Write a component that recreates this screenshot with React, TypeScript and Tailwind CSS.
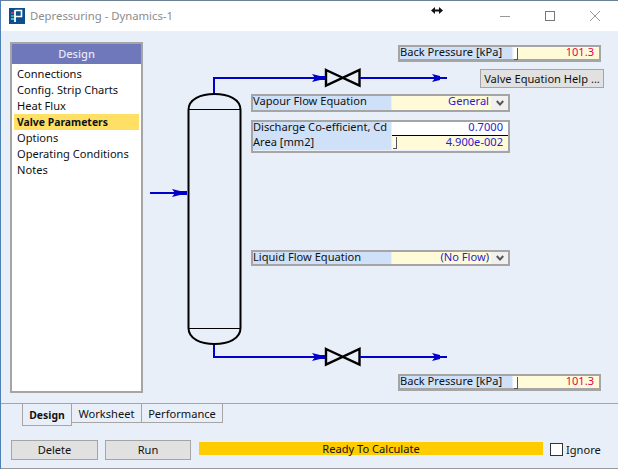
import React from 'react';

const uiFont = { fontFamily: '"Noto Sans", "DejaVu Sans", sans-serif' };

const NAV_ITEMS = ['Connections', 'Config. Strip Charts', 'Heat Flux', 'Valve Parameters', 'Options', 'Operating Conditions', 'Notes'];

const Slider = () => (
  <span className="absolute left-[1px] top-[1px] h-[12px] w-[4px] border-r border-b border-[#555] bg-white" />
);

const LabelCell: React.FC<{ text: string; width: string; lead?: string }> = ({ text, width, lead = 'leading-[10px]' }) => (
  <div className={`${width} ${lead} h-full shrink-0 whitespace-nowrap bg-[#cfe1f9] text-[11.1px] text-[#111]`}>{text}</div>
);

const BackPressure: React.FC<{ className: string }> = ({ className }) => (
  <div className={`${className} left-[398px] flex h-[17px] w-[203px] border-2 border-b-[3px] border-[#a5a5a5] bg-[#e9eff9]`}>
    <LabelCell text="Back Pressure [kPa]" width="w-[112px]" />
    <div className="relative ml-[1px] flex-1 bg-[#fffbd8] pr-[5px] text-right text-[11.1px] leading-[10px] text-[#e6005c]">
      <Slider />
      101.3
    </div>
  </div>
);

const DropField: React.FC<{ className: string; label: string; value: string }> = ({ className, label, value }) => (
  <div className={`${className} left-[251px] flex w-[259px] border-2 border-[#a5a5a5] bg-[#e9eff9]`}>
    <LabelCell text={label} width="w-[138px]" />
    <div className="ml-[1px] flex-1 bg-[#fffbd8] pr-[2px] text-right text-[11.1px] leading-[10px] text-[#2a1ad0]">{value}</div>
    <div className="flex w-[17px] shrink-0 items-center justify-center bg-[#f0f0f0]">
      <svg width="8" height="7" viewBox="0 0 8 7">
        <path d="M0.8 1 L4 4.6 L7.2 1" fill="none" stroke="#555" strokeWidth="2" />
      </svg>
    </div>
  </div>
);

const ValveFlow: React.FC<{ y: number }> = ({ y }) => (
  <g>
    <path d={`M326 ${y - 8} L359.5 ${y + 7.5} V${y - 8} L326 ${y + 7.5} Z`} fill="none" stroke="#000" strokeWidth="2.4" />
    <path d={`M360 ${y} H447`} stroke="#0000c8" strokeWidth="2" fill="none" />
    <path d={`M432 ${y - 4} L440 ${y - 2} V${y + 2} L432 ${y + 4} L435 ${y} Z`} fill="#0000c8" />
    <path d={`M312 ${y - 4} L320 ${y - 2} H325 V${y + 2} H320 L312 ${y + 4} L315 ${y} Z`} fill="#0000c8" />
  </g>
);

const Diagram = () => (
  <svg className="absolute left-0 top-0" width="618" height="469" viewBox="0 0 618 469">
    <path d="M214 94 V78 H325" fill="none" stroke="#0000c8" strokeWidth="2" />
    <path d="M214 344 V357 H325" fill="none" stroke="#0000c8" strokeWidth="2" />
    <path d="M150 193 H187" fill="none" stroke="#0000c8" strokeWidth="2" />
    <path d="M172 189 L180 191 H187 V195 H180 L172 197 L175 193 Z" fill="#0000c8" />
    <ValveFlow y={78} />
    <ValveFlow y={357} />
    <path d="M188.5 110 C188.5 99 201 94 214.5 94 C228 94 240.5 99 240.5 110 V328 C240.5 339 228 344 214.5 344 C201 344 188.5 339 188.5 328 Z" fill="#e9eff9" stroke="#000" strokeWidth="2" />
    <path d="M188 109.5 H241 M188 328.5 H241" stroke="#000" strokeWidth="1" />
  </svg>
);

export default function App() {
  return (
    <div className="relative h-[469px] w-[618px] overflow-hidden bg-[#e9eff9]" style={uiFont}>
      <div className="flex h-full flex-col border-l border-[#4f81b5]">
        {/* title bar */}
        <div className="flex h-[31px] shrink-0 items-center border-t border-[#6b7f95] bg-white pl-[8px]">
          <svg width="16" height="16" viewBox="0 0 16 16" className="shrink-0">
            <rect width="16" height="16" fill="#0d4f8c" />
            <path d="M6 2.5 H12.5 V8.5 H6" fill="none" stroke="#fff" strokeWidth="1.6" />
            <path d="M6 2 V14" stroke="#fff" strokeWidth="1.8" />
            <path d="M2 5 H5" stroke="#e53935" strokeWidth="1.6" />
            <path d="M2 8 H5" stroke="#43c463" strokeWidth="1.6" />
            <path d="M2 11 H5" stroke="#5fd0f0" strokeWidth="1.6" />
          </svg>
          <span className="ml-[5px] text-[11.3px] text-[#8d8d8d]">Depressuring - Dynamics-1</span>
          <span className="ml-auto mr-[18px] flex items-center gap-[35px]">
            <svg width="10" height="10" viewBox="0 0 10 10">
              <path d="M0 5.5 H10" stroke="#999" strokeWidth="1" />
            </svg>
            <svg width="10" height="10" viewBox="0 0 10 10">
              <rect x="0.5" y="0.5" width="9" height="9" fill="none" stroke="#777" strokeWidth="1" />
            </svg>
            <svg width="10" height="10" viewBox="0 0 10 10">
              <path d="M0 0 L10 10 M10 0 L0 10" stroke="#999" strokeWidth="1" />
            </svg>
          </span>
        </div>

        {/* body */}
        <div className="flex-1 pl-[9px] pt-[11px]">
          <div className="h-[351px] w-[133px] border-2 border-[#a5a5a5] bg-white">
            <div className="h-[20px] bg-[#6f78bb] text-center text-[11.1px] font-medium leading-[20px] text-[#e8e8f5]">Design</div>
            <ul className="mt-[2px] px-[2px] text-[11.1px] leading-[16px] text-[#111]">
              {NAV_ITEMS.map((item) => (
                <li key={item} className={item === 'Valve Parameters' ? 'bg-[#ffe064] pl-[3px] text-[10.4px] font-bold' : 'pl-[3px]'}>
                  {item}
                </li>
              ))}
            </ul>
          </div>
        </div>

        {/* tabs */}
        <div className="flex h-[37px] shrink-0 items-start border-t border-[#a5a5a5] pl-[21px] text-[11.1px] text-[#111]">
          <div className="h-[22px] w-[50px] border-x border-b border-[#a5a5a5] text-center text-[10.4px] font-bold leading-[22px]">Design</div>
          <div className="h-[19px] w-[70px] border-r border-b border-[#a5a5a5] text-center leading-[20px]">Worksheet</div>
          <div className="h-[19px] w-[81px] border-r border-b border-[#a5a5a5] text-center leading-[20px]">Performance</div>
        </div>

        {/* bottom buttons */}
        <div className="flex h-[29px] shrink-0 items-start border-b border-[#9a9a9a] pl-[10px] text-[11.1px] text-[#111]">
          <button className="h-[20px] w-[87px] border border-[#a5a5a5] bg-[#e1e1e1] leading-[18px]">Delete</button>
          <button className="ml-[7px] h-[20px] w-[86px] border border-[#a5a5a5] bg-[#e1e1e1] leading-[18px]">Run</button>
          <div className="ml-[8px] mt-[2px] h-[13px] w-[344px] bg-[#ffcc00] text-center leading-[13px]">Ready To Calculate</div>
          <span className="ml-[7px] mt-[3px] h-[13px] w-[13px] border border-[#333] bg-white" />
          <span className="ml-[3px] mt-[2px] leading-[16px]">Ignore</span>
        </div>
      </div>

      {/* flowsheet canvas */}
      <Diagram />
      <BackPressure className="absolute top-[45px]" />
      <button className="absolute left-[480px] top-[69px] h-[19px] w-[124px] border border-[#a5a5a5] bg-[#e1e1e1] text-[11.1px] leading-[17px] text-[#111]">
        Valve Equation Help ...
      </button>
      <DropField className="absolute top-[94px] h-[18px]" label="Vapour Flow Equation" value="General" />
      <div className="absolute left-[251px] top-[120px] w-[259px] border-2 border-[#a5a5a5] text-[11.1px]">
        <div className="flex h-[14px]">
          <LabelCell text="Discharge Co-efficient, Cd" width="w-[138px]" />
          <div className="ml-[1px] flex-1 border-b border-black bg-white pr-[5px] text-right leading-[10px] text-[#2a1ad0]">0.7000</div>
        </div>
        <div className="flex h-[15px] pb-[1px]">
          <LabelCell text="Area [mm2]" width="w-[138px]" lead="leading-[12px]" />
          <div className="relative ml-[1px] flex-1 bg-[#fffbd8] pr-[5px] text-right leading-[12px] text-[#2a1ad0]">
            <Slider />
            4.900e-002
          </div>
        </div>
      </div>
      <DropField className="absolute top-[250px] h-[16px]" label="Liquid Flow Equation" value="(No Flow)" />
      <BackPressure className="absolute top-[374px]" />

      {/* resize cursor */}
      <svg className="absolute left-[431px] top-[7px]" width="12" height="7" viewBox="0 0 12 7">
        <path d="M0 3.5 L4 0 V2.5 H8 V0 L12 3.5 L8 7 V4.5 H4 V7 Z" fill="#111" />
      </svg>
    </div>
  );
}
